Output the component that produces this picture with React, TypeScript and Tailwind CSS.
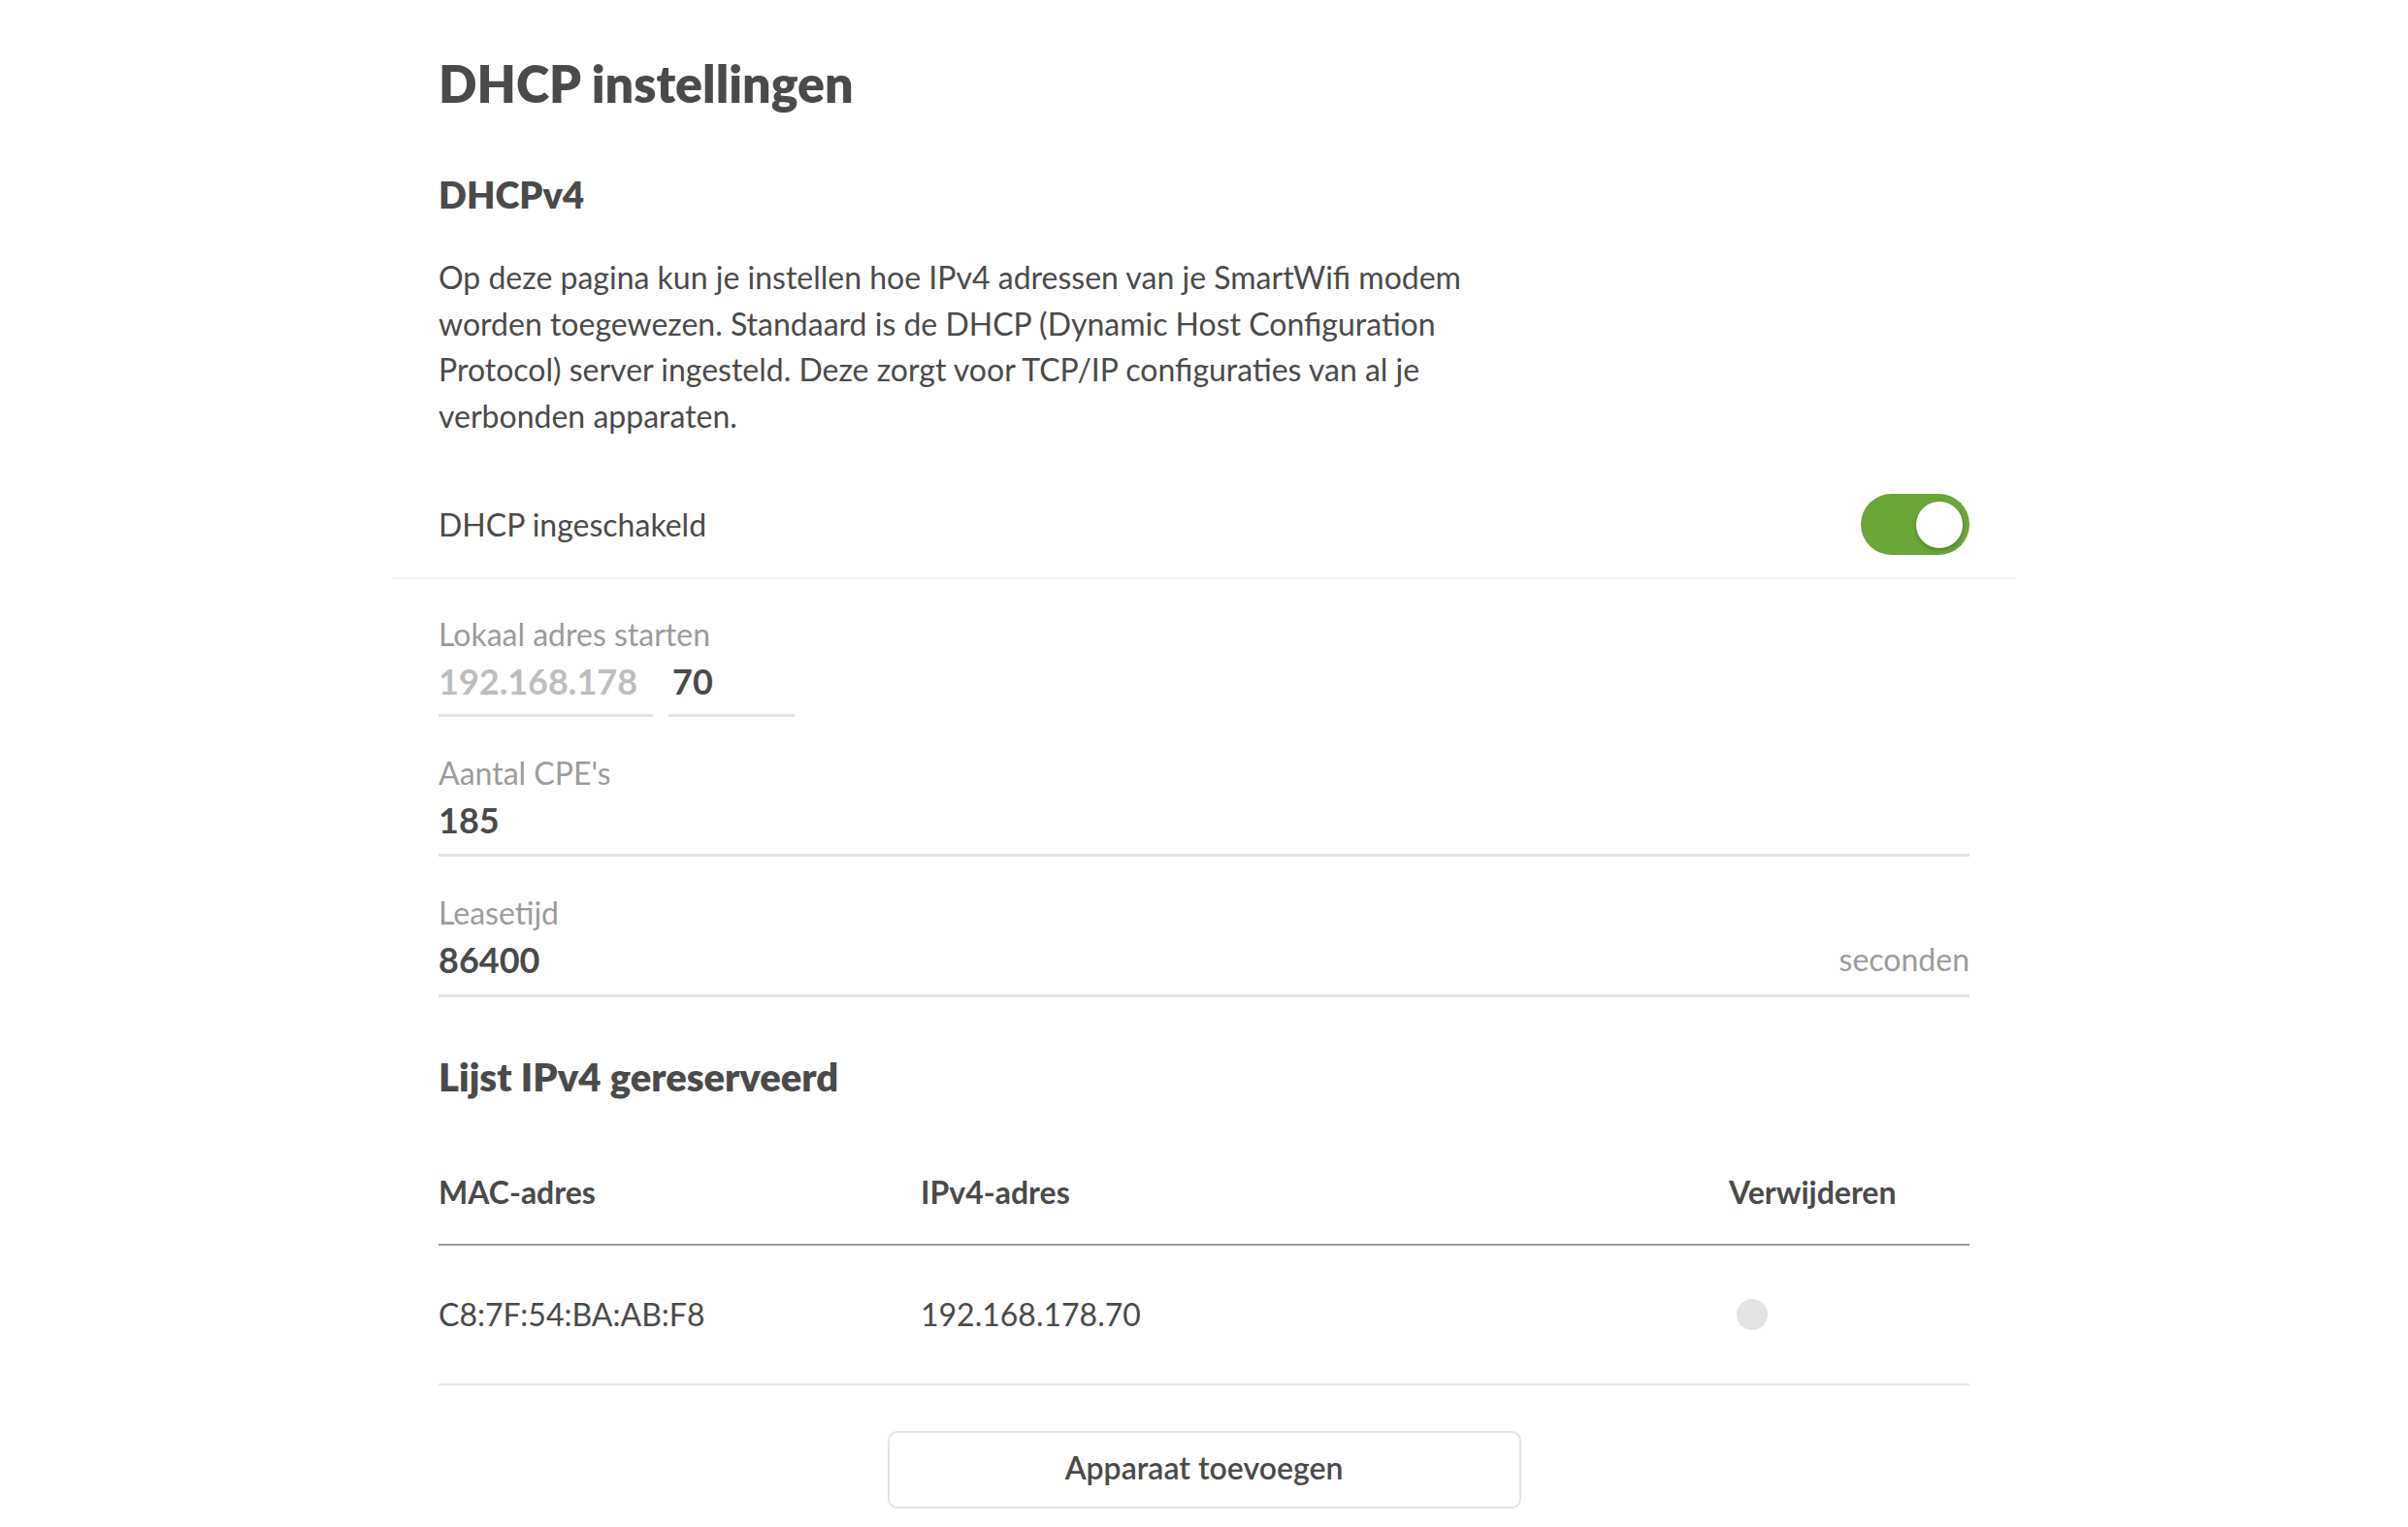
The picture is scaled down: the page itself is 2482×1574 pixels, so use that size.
export default function App() {
  const reserved = [{ mac: "C8:7F:54:BA:AB:F8", ip: "192.168.178.70" }];

  return (
    <div className="min-h-screen bg-white text-[#4a4a4a] font-['Lato','Liberation_Sans',sans-serif]">
      <div className="mx-auto w-[1674px] pt-[54px]">
        {/* Intro */}
        <div className="px-12">
          <h1 className="text-[52px] leading-[64px] font-extrabold">DHCP instellingen</h1>
          <h2 className="mt-[58px] text-[38px] leading-[48px] font-extrabold">DHCPv4</h2>
          <p className="mt-[38px] w-[1090px] text-[32px] leading-[47.5px]">
            Op deze pagina kun je instellen hoe IPv4 adressen van je SmartWifi modem worden toegewezen.
            Standaard is de DHCP (Dynamic Host Configuration Protocol) server ingesteld. Deze zorgt voor
            TCP/IP configuraties van al je verbonden apparaten.
          </p>

          {/* Toggle row */}
          <div className="mt-[57px] flex items-center justify-between">
            <span className="text-[32px] leading-[40px]">DHCP ingeschakeld</span>
            <button className="flex h-[63px] w-[112px] items-center justify-end rounded-full bg-[#6aa638] pr-[7px]">
              <span className="h-[48px] w-[48px] rounded-full bg-white shadow-[0_2px_4px_rgba(0,0,0,0.25)]" />
            </button>
          </div>
        </div>

        <div className="mt-[23px] h-[2px] bg-[#f2f2f2]" />

        {/* Fields */}
        <div className="px-12 pt-[39px]">
          <div>
            <div className="text-[32px] leading-[36px] text-[#9b9b9b]">Lokaal adres starten</div>
            <div className="mt-2 flex gap-4">
              <div className="w-[221px] border-b-[3px] border-[#e3e3e3] pb-3 text-[36px] leading-[44px] font-bold text-[#bdbdbd]">
                192.168.178
              </div>
              <div className="w-[130px] border-b-[3px] border-[#e3e3e3] pb-3 pl-1 text-[36px] leading-[44px] font-bold">
                70
              </div>
            </div>
          </div>

          <div className="mt-[40px]">
            <div className="text-[32px] leading-[36px] text-[#9b9b9b]">Aantal CPE's</div>
            <div className="mt-2 border-b-[3px] border-[#e3e3e3] pb-[13px] text-[36px] leading-[44px] font-bold">185</div>
          </div>

          <div className="mt-[40px]">
            <div className="text-[32px] leading-[36px] text-[#9b9b9b]">Leasetijd</div>
            <div className="mt-2 flex items-center justify-between border-b-[3px] border-[#e3e3e3] pb-[14px]">
              <span className="text-[36px] leading-[44px] font-bold">86400</span>
              <span className="text-[32px] leading-[44px] text-[#9b9b9b]">seconden</span>
            </div>
          </div>

          {/* Reserved list */}
          <h2 className="mt-[58px] text-[40px] leading-[48px] font-extrabold">Lijst IPv4 gereserveerd</h2>

          <div className="mt-[75px]">
            <div className="grid grid-cols-[497px_833px_1fr] border-b-2 border-[#9b9b9b] pb-[33px] text-[32px] leading-[40px] font-bold">
              <span>MAC-adres</span>
              <span>IPv4-adres</span>
              <span>Verwijderen</span>
            </div>
            {reserved.map((r) => (
              <div
                key={r.mac}
                className="grid grid-cols-[497px_833px_1fr] items-center border-b-2 border-[#e6e6e6] py-[51px] text-[32px] leading-[40px]"
              >
                <span>{r.mac}</span>
                <span>{r.ip}</span>
                <span className="ml-2 h-8 w-8 rounded-full bg-[#e3e3e3]" />
              </div>
            ))}
          </div>

          <div className="mt-[47px] flex justify-center">
            <button className="h-[80px] w-[653px] rounded-[10px] border-2 border-[#e3e3e3] pb-[5px] text-[32px] font-semibold">
              Apparaat toevoegen
            </button>
          </div>
        </div>
      </div>
    </div>
  );
}
